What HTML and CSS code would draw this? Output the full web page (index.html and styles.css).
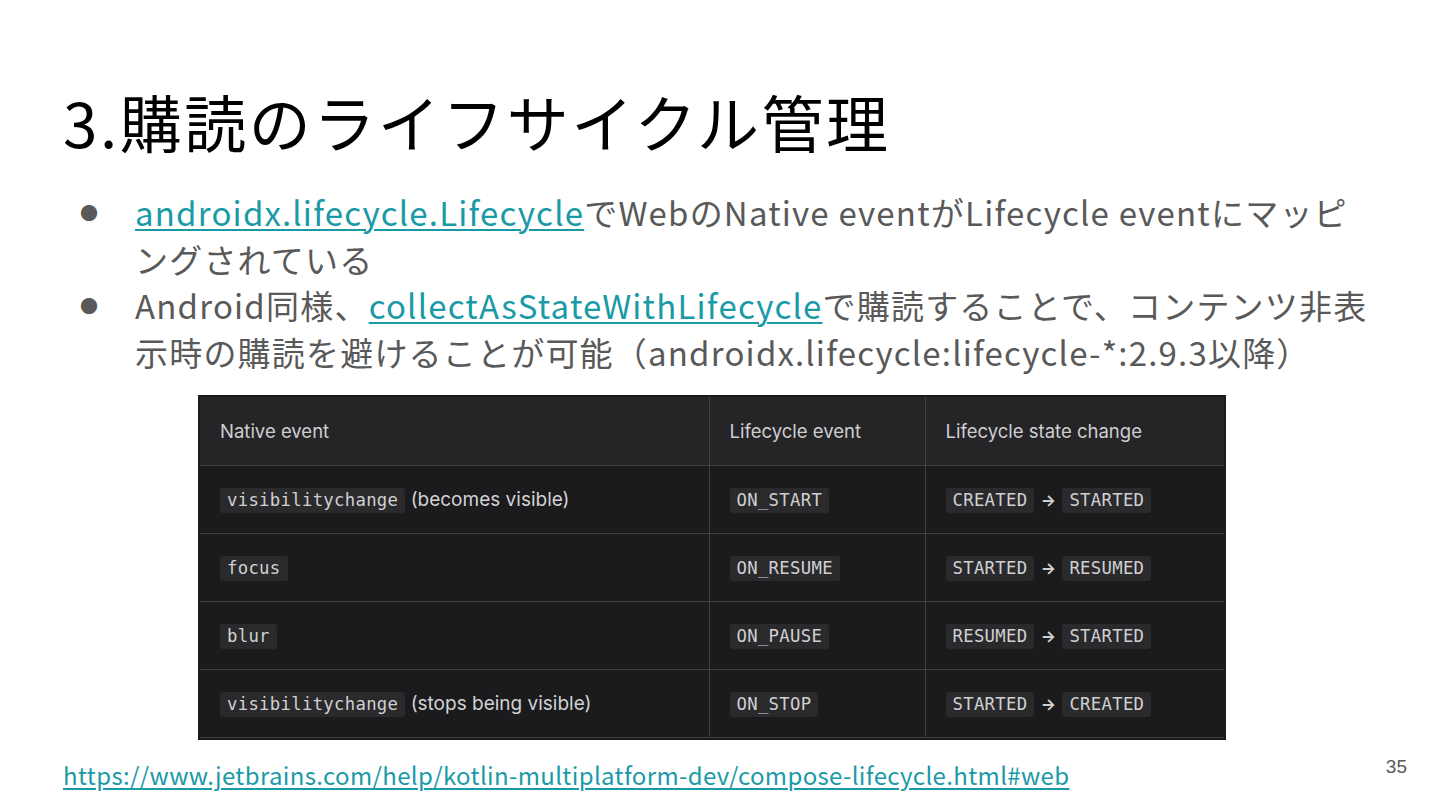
FILE: index.html
```html
<!DOCTYPE html>
<html lang="ja">
<head>
<meta charset="utf-8">
<link rel="stylesheet" href="styles.css">
</head>
<body>
<div class="slide">
  <h1 class="title">3.購読のライフサイクル管理</h1>
  <ul class="bullets">
    <li><span class="dot">●</span><span class="txt"><a class="link" href="#">androidx.lifecycle.Lifecycle</a>でWebのNative eventがLifecycle eventにマッピ<br>ングされている</span></li>
    <li><span class="dot">●</span><span class="txt">Android同様、<a class="link" href="#">collectAsStateWithLifecycle</a>で購読することで、コンテンツ非表<br>示時の購読を避けることが可能（androidx.lifecycle:lifecycle-*:2.9.3以降）</span></li>
  </ul>
  <div class="tablewrap">
    <table class="tbl">
      <colgroup><col class="c1"><col class="c2"><col class="c3"></colgroup>
      <thead>
        <tr><th>Native event</th><th>Lifecycle event</th><th>Lifecycle state change</th></tr>
      </thead>
      <tbody>
        <tr><td><code>visibilitychange</code> (becomes visible)</td><td><code>ON_START</code></td><td><code>CREATED</code> <span class="arr">→</span> <code>STARTED</code></td></tr>
        <tr><td><code>focus</code></td><td><code>ON_RESUME</code></td><td><code>STARTED</code> <span class="arr">→</span> <code>RESUMED</code></td></tr>
        <tr><td><code>blur</code></td><td><code>ON_PAUSE</code></td><td><code>RESUMED</code> <span class="arr">→</span> <code>STARTED</code></td></tr>
        <tr><td><code>visibilitychange</code> (stops being visible)</td><td><code>ON_STOP</code></td><td><code>STARTED</code> <span class="arr">→</span> <code>CREATED</code></td></tr>
      </tbody>
    </table>
  </div>
  <div class="footer">
    <a class="flink" href="#">https://www.jetbrains.com/help/kotlin-multiplatform-dev/compose-lifecycle.html#web</a>
    <span class="pnum">35</span>
  </div>
</div>
</body>
</html>
```

FILE: styles.css
```css
html, body {
  margin: 0;
  padding: 0;
  background: #ffffff;
}
.slide {
  width: 1440px;
  height: 810px;
  box-sizing: border-box;
  overflow: hidden;
  font-family: "Noto Sans CJK JP", "Noto Sans", sans-serif;
  display: flex;
  flex-direction: column;
}
.title {
  margin: 78px 0 0 63px;
  font-size: 62px;
  font-weight: 400;
  line-height: 86px;
  color: #000000;
  letter-spacing: 2.5px;
}
.bullets {
  list-style: none;
  margin: 25px 0 0 0;
  padding: 0;
}
.bullets li {
  display: flex;
  align-items: flex-start;
  font-size: 33px;
  line-height: 46.5px;
  color: #595959;
}
.dot {
  width: 55px;
  margin-left: 80px;
  font-size: 18px;
  line-height: 46.5px;
  color: #595959;
  flex: none;
}
.txt {
  letter-spacing: 1.2px;
  white-space: nowrap;
}
.link {
  color: #1a9aa7;
  text-decoration: underline;
  text-decoration-thickness: 2px;
  text-underline-offset: 3px;
}
.tablewrap {
  margin: 20px 0 0 198px;
  width: 1028px;
  background: #151516;
  border: 2px solid #1a1a1a;
  box-sizing: border-box;
}
.tbl {
  width: 100%;
  border-collapse: collapse;
  table-layout: fixed;
  font-family: Inter, "Liberation Sans", sans-serif;
  font-size: 19px;
  color: #d2d2d4;
}
.c1 { width: 509px; }
.c2 { width: 216px; }
.c3 { width: auto; }
.tbl th, .tbl td {
  height: 68px;
  box-sizing: border-box;
  padding: 0 20px;
  border: 1px solid #404042;
  text-align: left;
  vertical-align: middle;
  font-weight: 400;
  white-space: nowrap;
}
.tbl thead th {
  background: #252527;
  color: #cfcfd1;
  border-top: none;
  font-size: 18.5px;
}
.tbl tbody td {
  background: #1b1b1d;
}
.tbl tr th:first-child, .tbl tr td:first-child { border-left: none; }
.tbl tr th:last-child, .tbl tr td:last-child { border-right: none; }
.tbl code {
  font-family: "DejaVu Sans Mono", "Liberation Mono", monospace;
  font-size: 17.3px;
  background: #2a2a2c;
  color: #d0d0d2;
  padding: 2px 7px 3px;
  border-radius: 3px;
  letter-spacing: 0.3px;
}
.arr {
  color: #d0d0d2;
  font-size: 16px;
  font-weight: 700;
  margin: 0 1px;
}
.footer {
  display: flex;
  justify-content: space-between;
  align-items: flex-start;
  margin-top: 14px;
  padding: 0 33px 0 63px;
}
.flink {
  font-family: "Noto Sans CJK JP", "Noto Sans", sans-serif;
  font-size: 24px;
  color: #1a9aa7;
  text-decoration: underline;
  text-decoration-thickness: 2px;
  text-underline-offset: 3px;
  margin-top: 3px;
  letter-spacing: 0.35px;
  line-height: 36px;
}
.pnum {
  font-family: "Liberation Sans", Arial, sans-serif;
  font-size: 19px;
  color: #595959;
  margin-top: 2px;
}
```
